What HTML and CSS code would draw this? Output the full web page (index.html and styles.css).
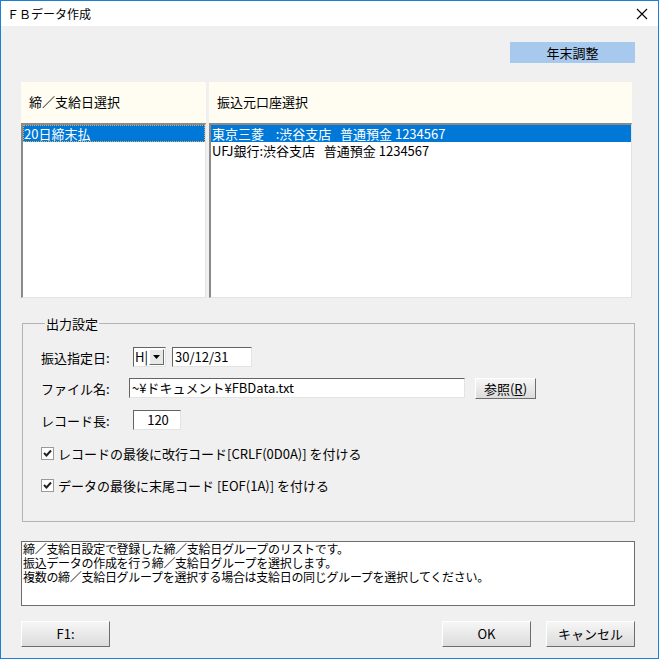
FILE: index.html
```html
<!DOCTYPE html>
<html lang="ja">
<head>
  <meta charset="UTF-8" />
  <title>ＦＢデータ作成</title>
  <link rel="stylesheet" href="styles.css">
</head>
<body>
  <div class="window">
    <div class="titlebar">
      <span class="title">ＦＢデータ作成</span>
      <span class="close">
        <svg width="12" height="12" viewBox="0 0 12 12"><path d="M1 1 L11 11 M11 1 L1 11" stroke="#000" stroke-width="1.1" fill="none"/></svg>
      </span>
    </div>

    <div class="content">
      <div class="toolbar">
        <div class="year-end">年末調整</div>
      </div>

      <div class="lists">
        <div class="panel panel-left">
          <div class="panel-head">締／支給日選択</div>
          <div class="listbox">
            <div class="item selected focused">20日締末払</div>
          </div>
        </div>
        <div class="panel panel-right">
          <div class="panel-head">振込元口座選択</div>
          <div class="listbox">
            <div class="item selected">東京三菱&nbsp;&nbsp;&nbsp;&nbsp;:渋谷支店&nbsp;&nbsp;&nbsp;普通預金 1234567</div>
            <div class="item">UFJ銀行:渋谷支店&nbsp;&nbsp;&nbsp;普通預金 1234567</div>
          </div>
        </div>
      </div>

      <fieldset class="group">
        <legend>出力設定</legend>

        <div class="row">
          <label class="lbl">振込指定日:</label>
          <div class="combo">
            <span class="combo-text">H|</span>
            <span class="combo-btn">
              <svg width="7" height="4" viewBox="0 0 7 4"><path d="M0 0 H7 L3.5 4 Z" fill="#000"/></svg>
            </span>
          </div>
          <div class="field date">30/12/31</div>
        </div>

        <div class="row">
          <label class="lbl lbl-file">ファイル名:</label>
          <div class="field file">~¥ドキュメント¥FBData.txt</div>
          <button class="btn browse">参照(<u>R</u>)</button>
        </div>

        <div class="row">
          <label class="lbl">レコード長:</label>
          <div class="field reclen">120</div>
        </div>

        <div class="row check-row first-check">
          <span class="checkbox">
            <svg width="9" height="9" viewBox="0 0 9 9"><path d="M1 4 L3.5 6.5 L8 1.5" stroke="#222" stroke-width="2" fill="none"/></svg>
          </span>
          <span>レコードの最後に改行コード[CRLF(0D0A)] を付ける</span>
        </div>

        <div class="row check-row">
          <span class="checkbox">
            <svg width="9" height="9" viewBox="0 0 9 9"><path d="M1 4 L3.5 6.5 L8 1.5" stroke="#222" stroke-width="2" fill="none"/></svg>
          </span>
          <span>データの最後に末尾コード [EOF(1A)] を付ける</span>
        </div>
      </fieldset>

      <div class="info">
        締／支給日設定で登録した締／支給日グループのリストです。<br>
        振込データの作成を行う締／支給日グループを選択します。<br>
        複数の締／支給日グループを選択する場合は支給日の同じグループを選択してください。
      </div>

      <div class="footer">
        <button class="btn big">F1:</button>
        <span class="spacer"></span>
        <button class="btn big">OK</button>
        <button class="btn big">キャンセル</button>
      </div>
    </div>
  </div>
</body>
</html>
```

FILE: styles.css
```css
* {
  box-sizing: border-box;
}
body {
  margin: 0;
  font-family: "Noto Sans CJK JP", "Noto Sans", sans-serif;
  font-size: 13px;
  color: #000;
}
.window {
  width: 659px;
  height: 659px;
  border: 1px solid #1c7fd6;
  background: #f0f0f0;
}
.titlebar {
  height: 25px;
  background: #fff;
  display: flex;
  align-items: center;
  padding-left: 6px;
  padding-right: 10px;
}
.title {
  font-size: 12px;
  flex: 1;
}
.close {
  display: flex;
  align-items: center;
}
.content {
  padding: 0 23px 0 20px;
}
.toolbar {
  display: flex;
  justify-content: flex-end;
  padding-top: 16px;
}
.year-end {
  width: 125px;
  height: 21px;
  background: #a8c9ee;
  text-align: center;
  line-height: 21px;
}
.lists {
  display: flex;
  gap: 3px;
  margin-top: 19px;
  width: 611px;
}
.panel-left {
  width: 185px;
}
.panel-right {
  flex: 1;
}
.panel-head {
  height: 41px;
  background: #fffdf2;
  padding-left: 8px;
  line-height: 40px;
}
.listbox {
  height: 175px;
  background: #fff;
  border-top: 2px solid #8a8a8a;
  border-left: 2px solid #8a8a8a;
  border-right: 1px solid #e3e3e3;
  border-bottom: 1px solid #e3e3e3;
}
.item {
  height: 17px;
  line-height: 17px;
  padding-left: 1px;
  white-space: nowrap;
}
.item.selected {
  background: #0078d7;
  color: #fff;
}
.item.focused {
  outline: 1px dotted #d8b060;
  outline-offset: -1px;
}
.group {
  margin: 18px 0 0 1px;
  border: 1px solid #b4b4b4;
  padding: 16px 0 26px 18px;
  min-width: 0;
}
.group legend {
  padding: 0 1px;
  margin-left: 4px;
  line-height: 15px;
}
.row {
  display: flex;
  align-items: center;
  height: 20px;
  margin-bottom: 11px;
}
.row:nth-of-type(2) {
  margin-bottom: 12px;
}
.lbl {
  width: 92px;
}
.lbl-file {
  width: 88px;
}
.field {
  height: 20px;
  background: #fff;
  border-top: 1px solid #646464;
  border-left: 1px solid #646464;
  border-right: 1px solid #e3e3e3;
  border-bottom: 1px solid #e3e3e3;
  line-height: 18px;
  padding-left: 2px;
  white-space: nowrap;
}
.combo {
  width: 33px;
  height: 20px;
  display: flex;
  background: #fff;
  border-top: 1px solid #646464;
  border-left: 1px solid #646464;
  border-right: 1px solid #e3e3e3;
  border-bottom: 1px solid #e3e3e3;
}
.combo-text {
  flex: 1;
  line-height: 18px;
  padding-left: 1px;
}
.combo-btn {
  width: 15px;
  margin: 1px;
  background: #e8e8e8;
  border-top: 1px solid #fff;
  border-left: 1px solid #fff;
  border-right: 1px solid #696969;
  border-bottom: 1px solid #696969;
  display: flex;
  align-items: center;
  justify-content: center;
}
.date {
  width: 80px;
  margin-left: 6px;
}
.file {
  width: 336px;
}
.reclen {
  width: 48px;
  text-align: center;
}
.btn {
  font-family: "Noto Sans CJK JP", "Noto Sans", sans-serif;
  font-size: 13px;
  color: #000;
  background: linear-gradient(#f6f6f6, #dcdcdc);
  border-top: 1px solid #fff;
  border-left: 1px solid #fff;
  border-right: 1px solid #6d6d6d;
  border-bottom: 1px solid #6d6d6d;
  padding: 0;
  line-height: 18px;
}
.browse {
  width: 61px;
  height: 21px;
  margin-left: 10px;
  margin-top: 1px;
}
.check-row {
  gap: 4px;
  margin-bottom: 12px;
}
.first-check {
  margin-top: 13px;
}
.check-row:last-child {
  margin-bottom: 0;
}
.checkbox {
  width: 13px;
  height: 13px;
  background: #fff;
  border: 1px solid #9a9a9a;
  display: flex;
  align-items: center;
  justify-content: center;
}
.info {
  margin-top: 19px;
  height: 65px;
  background: #fff;
  border: 1px solid #6d6d6d;
  font-size: 12px;
  line-height: 14px;
  padding: 0 1px;
  letter-spacing: -0.3px;
}
.footer {
  display: flex;
  gap: 15px;
  margin-top: 15px;
}
.spacer {
  flex: 1;
}
.btn.big {
  width: 89px;
  height: 26px;
}
```
